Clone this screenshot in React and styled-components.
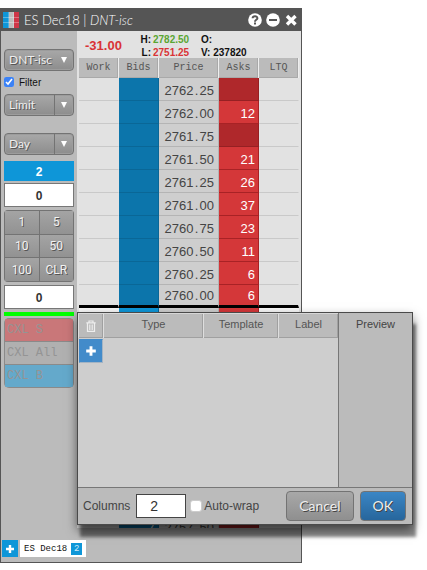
import React, { useState } from 'react';
import styled, { createGlobalStyle } from 'styled-components';

const Global = createGlobalStyle`
  *, *::before, *::after { box-sizing: border-box; }
  body { margin: 0; background: #fff; font-family: "Liberation Sans", Arial, sans-serif; color: #444; }
  button, input, select { font-family: inherit; margin: 0; padding: 0; border-radius: 0; }
`;

const Desktop = styled.main`
  position: relative;
  height: 100vh;
  min-height: 480px;
  padding: 8px 125px 7px 0;
  overflow: hidden;
`;

const TraderWindow = styled.section`
  display: flex;
  flex-direction: column;
  height: 100%;
  border: 1px solid #555;
  background: #bbb;
`;

const TitleBar = styled.header`
  display: flex;
  align-items: center;
  gap: 5px;
  height: 22px;
  flex: none;
  padding: 0 3px 0 2px;
  background: #555;
  color: #fff;
`;

const Title = styled.h1`
  flex: 1;
  margin: 0;
  font: 300 13px/20px Lato, "Open Sans", sans-serif;
  white-space: nowrap;
`;

const WindowActions = styled.div`
  display: flex;
  gap: 4px;
`;

const IconButton = styled.button`
  display: flex;
  border: 0;
  background: none;
  color: #fff;
`;

const Workspace = styled.div`
  display: flex;
  flex: 1;
  min-height: 0;
`;

const OrderPanel = styled.aside`
  display: flex;
  flex-direction: column;
  flex: none;
  width: 76px;
  padding: 18px 3px 0;
  background: #bbb;
`;

const SelectBox = styled.div`
  position: relative;
  height: 22px;
  margin-bottom: ${(p) => p.$after}px;
  border: 1px solid #737373;
  border-radius: 4px;
  background: linear-gradient(#a8a8a8, #8d8d8d);
  box-shadow: inset 0 0 0 1px #9c9c9c;
`;

const Select = styled.select`
  width: 100%;
  height: 20px;
  padding-left: 4px;
  appearance: none;
  border: 0;
  background: transparent;
  color: #eee;
  font: 400 12px/20px Lato, sans-serif;
  text-shadow: 1px 1px 0 #555;
`;

const Arrow = styled.span`
  position: absolute;
  top: 0;
  right: 0;
  bottom: 0;
  display: flex;
  align-items: center;
  justify-content: center;
  width: 19px;
  border-left: ${(p) => (p.$divided ? '1px solid #737373' : '0')};
  pointer-events: none;
`;

const FilterLabel = styled.label`
  display: flex;
  align-items: center;
  gap: 5px;
  height: 12px;
  margin-bottom: 6px;
  color: #111;
  font-size: 10px;
`;

const Check = styled.input`
  flex: none;
  width: ${(p) => p.$size}px;
  height: ${(p) => p.$size}px;
  accent-color: #3b82f6;
  ${(p) => p.$plain && 'appearance: none; border: 1px solid #ccc; border-radius: 3px; background: #fff;'}
`;

const TotalQty = styled.output`
  height: 20px;
  margin-bottom: 2px;
  background: #0e96d8;
  color: #fff;
  font: 700 12px/22px "Liberation Sans", sans-serif;
  text-align: center;
`;

const QtyInput = styled.input`
  width: 100%;
  height: 24px;
  padding-top: 2px;
  border: 1px solid #777;
  background: #fff;
  color: #333;
  font-size: 12px;
  font-weight: 700;
  text-align: center;
`;

const Keypad = styled.div`
  display: grid;
  grid-template-columns: 1fr 1fr;
  gap: 1px;
  height: 72px;
  margin: 3px 0;
  padding: 1px;
  border-radius: 4px;
  background: #737373;
  overflow: hidden;
`;

const Key = styled.button`
  border: 0;
  background: linear-gradient(#a4a4a4, #929292);
  color: #f2f2f2;
  font-size: 12px;
  font-family: Roboto, sans-serif;
  text-shadow: 1px 1px 0 #555;
`;

const StatusLine = styled.div`
  height: 4px;
  margin: 3px 0 2px;
  background: #0f0;
`;

const CancelStack = styled.div`
  display: grid;
  gap: 1px;
  height: 70px;
  padding: 1px;
  border-radius: 5px;
  background: #8a8a8a;
  overflow: hidden;
`;

const CancelOrders = styled.button`
  padding-left: 2px;
  border: 0;
  background: ${(p) => p.$tone};
  color: #949494;
  font: 12px/20px "Liberation Mono", monospace;
  text-align: left;
`;

const Ladder = styled.div`
  display: flex;
  flex-direction: column;
  flex: 1;
  min-width: 0;
  background: #bbb;
`;

const LadderClip = styled.div`
  flex: 1;
  min-height: 0;
  margin-bottom: 12px;
  padding: 0 2px;
  overflow: hidden;
  background: #e2e2e2;
`;

const Stats = styled.div`
  display: flex;
  align-items: center;
  height: 27px;
  padding: 2px 0 0 6px;
  color: #111;
  font-weight: 700;
`;

const NetChange = styled.strong`
  width: 54px;
  color: #d93336;
  font-size: 13px;
`;

const StatGrid = styled.dl`
  display: grid;
  grid-template-columns: 14px 48px auto;
  margin: 0;
  font-size: 10px;
  line-height: 13px;
  white-space: nowrap;
`;

const StatName = styled.dt`
  text-align: right;
  padding-right: 2px;
`;

const StatValue = styled.dd`
  margin: 0;
  color: ${(p) => p.$color || '#111'};
`;

const PriceTable = styled.table`
  width: 100%;
  table-layout: fixed;
  border-collapse: separate;
  border-spacing: 0;
`;

const HeadCell = styled.th`
  width: ${(p) => p.$width};
  height: 20px;
  padding: 0;
  border-right: 1px solid #eee;
  box-shadow: inset -1px -1px 0 #a9a9a9;
  background: #bbb;
  color: #555;
  font: 400 10px/20px "Liberation Mono", monospace;
`;

const cellTone = {
  idle: ['#e2e2e2', '#c9c9c9'],
  fresh: ['#f8f8f8', '#c9c9c9'],
  price: ['#cecece', '#b4b4b4'],
  bid: ['#0c75ab', '#0a6797'],
  liveBid: ['#0e96d8', '#0a6797'],
  ask: ['#d43739', '#a82225'],
  emptyAsk: ['#af282b', '#962023'],
};

const Cell = styled.td`
  height: 23px;
  padding: ${(p) => (p.$marker ? '1px' : '2px')} ${(p) => (p.$tone === 'price' ? '4px' : '3px')} 0 0;
  border-right: 1px solid ${(p) => (p.$tone === 'idle' || p.$tone === 'fresh' ? 'transparent' : cellTone[p.$tone][1])};
  border-bottom: ${(p) => (p.$marker ? '3px solid #000' : `1px solid ${cellTone[p.$tone][1]}`)};
  background: ${(p) => cellTone[p.$tone][0]};
  color: ${(p) => (p.$tone === 'price' ? '#444' : '#fff')};
  font-size: 13px;
  line-height: 19px;
  text-align: right;
  white-space: nowrap;
`;

const Point = styled.span`
  display: inline-block;
  width: 6px;
  text-align: center;
`;

const TabBar = styled.footer`
  display: flex;
  align-items: flex-start;
  gap: 2px;
  flex: none;
  height: 22px;
  padding-left: 1px;
`;

const AddTab = styled.button`
  display: flex;
  align-items: center;
  justify-content: center;
  width: 16px;
  height: 17px;
  border: 0;
  background: #0e96d8;
  color: #fff;
`;

const Tab = styled.button`
  display: flex;
  align-items: center;
  gap: 4px;
  height: 17px;
  padding: 0 4px;
  border: 0;
  background: #fff;
  color: #111;
  font-size: 9px;
  font-family: "Liberation Mono", monospace;
`;

const TabCount = styled.span`
  width: 11px;
  height: 12px;
  background: #0e96d8;
  color: #cdeafa;
  font-size: 9px;
  line-height: 12px;
`;

const Dialog = styled.section`
  position: absolute;
  top: 312px;
  right: 14px;
  bottom: 45px;
  left: 77px;
  display: flex;
  flex-direction: column;
  border: 1px solid #4a4a4a;
  background: #bbb;
  box-shadow: 0 5px 10px rgba(0, 0, 0, 0.55), 3px 12px 3px 0 rgba(0, 0, 0, 0.45);
`;

const DialogBody = styled.div`
  display: flex;
  flex: 1;
  min-height: 0;
  border-bottom: 1px solid #777;
`;

const Buttons = styled.div`
  flex: 1;
  min-width: 0;
  background: #cecece;
`;

const ButtonTable = styled.table`
  width: 100%;
  table-layout: fixed;
  border-collapse: separate;
  border-spacing: 0;
`;

const ButtonHead = styled.th`
  width: ${(p) => p.$width};
  height: 25px;
  padding: 0;
  border-top: 1px solid #d6d6d6;
  border-left: 1px solid #dedede;
  box-shadow: inset -1px -1px 0 #a0a0a0;
  background: #bbb;
  color: #555;
  font-size: 11px;
  font-weight: 400;
  line-height: 20px;
  vertical-align: top;
`;

const HeadIcon = styled.span`
  display: flex;
  align-items: center;
  justify-content: center;
  height: 24px;
`;

const AddCell = styled.td`
  padding: 1px 0 0 1px;
`;

const AddButton = styled.button`
  display: flex;
  align-items: center;
  justify-content: center;
  width: 24px;
  height: 24px;
  border: 1px solid #a4b4c4;
  border-top-color: #428bca;
  border-left-color: #428bca;
  background: #428bca;
  color: #fff;
`;

const Preview = styled.div`
  flex: none;
  width: 74px;
  border-left: 1px solid #777;
  color: #444;
  font-size: 11px;
  line-height: 22px;
  text-align: center;
`;

const DialogFooter = styled.footer`
  display: flex;
  align-items: center;
  flex: none;
  height: 36px;
  padding: 0 6px 0 5px;
  font-size: 12px;
`;

const ColumnsLabel = styled.label`
  display: flex;
  align-items: center;
  gap: 6px;
  margin-right: 4px;
`;

const ColumnsInput = styled.input`
  width: 50px;
  height: 24px;
  padding-left: 13px;
  border: 1px solid #444;
  background: #fff;
  color: #333;
  font-size: 14px;
`;

const WrapLabel = styled.label`
  display: flex;
  flex: 1;
  align-items: center;
  gap: 2px;
  white-space: nowrap;
`;

const ActionButton = styled.button`
  height: 30px;
  padding: 0 12px;
  margin-left: 6px;
  border: 1px solid #737373;
  border-radius: 4px;
  background: ${(p) => (p.$primary ? 'linear-gradient(#3b86c5, #27669c)' : 'linear-gradient(#a8a8a8, #8f8f8f)')};
  color: #eee;
  font: 400 14px/26px Lato, sans-serif;
  text-shadow: 1px 1px 0 #444;
`;

const Plus = ({ size = 10 }) => (
  <svg width={size} height={size} viewBox="0 0 10 10" aria-hidden="true">
    <path d="M5 1v8M1 5h8" stroke="currentColor" strokeWidth="2.4" />
  </svg>
);

const Triangle = () => (
  <svg width="8" height="8" viewBox="0 0 8 8" aria-hidden="true">
    <path d="M1 1h6L4 7z" fill="#fff" />
  </svg>
);

const LadderLogo = () => (
  <svg width="16" height="16" viewBox="0 0 16 16" aria-hidden="true">
    <path d="M0 0h6v16H0z" fill="#0e96d8" />
    <path d="M6 0h5v16H6z" fill="#bdbdbd" />
    <path d="M11 0h5v16h-5z" fill="#cf3648" />
    <path d="M0 5.5h16M0 10.5h16" stroke="#fff" strokeOpacity=".3" />
    <path d="M5.500 0v16M10.500 0v16" stroke="#fff" strokeOpacity=".25" />
  </svg>
);

const HelpIcon = () => (
  <svg width="14" height="14" viewBox="0 0 14 14" aria-hidden="true">
    <circle cx="7" cy="7" r="6.8" fill="#fff" />
    <path d="M4.600 5.300C4.700 2.500 9.400 2.500 9.400 5.200 9.400 6.800 7 6.800 7 8.700" fill="none" stroke="#555" strokeWidth="2" />
    <path d="M6 9.600h2v1.900H6z" fill="#555" />
  </svg>
);

const MinusIcon = () => (
  <svg width="14" height="14" viewBox="0 0 14 14" aria-hidden="true">
    <circle cx="7" cy="7" r="6.8" fill="#fff" />
    <path d="M3 7h8" stroke="#555" strokeWidth="2" />
  </svg>
);

const CloseIcon = () => (
  <svg width="14" height="14" viewBox="0 0 14 14" aria-hidden="true">
    <path d="M3 3l8.500 8.500M11.500 3L3 11.500" stroke="#fff" strokeWidth="3.4" />
  </svg>
);

const TrashIcon = () => (
  <svg width="10" height="12" viewBox="0 0 10 12" fill="none" stroke="#eee" aria-hidden="true">
    <path d="M.3 2.8h9.4M3 2.5V1h4v1.500M1.500 3v8.400h7V3" strokeWidth="1.2" />
    <path d="M3.500 4.500v5.500M5 4.500v5.500M6.500 4.500v5.500" strokeWidth=".8" />
  </svg>
);

const ladderRows = [
  ['2762.25', ''], ['2762.00', '12'], ['2761.75', ''], ['2761.50', '21'], ['2761.25', '26'],
  ['2761.00', '37'], ['2760.75', '23'], ['2760.50', '11'], ['2760.25', '6'], ['2760.00', '6'],
  ['2759.75', ''], ['2759.50', ''], ['2759.25', ''], ['2759.00', ''], ['2758.75', ''],
  ['2758.50', ''], ['2758.25', ''], ['2758.00', ''], ['2757.75', ''], ['2757.50', ''],
];
const MARKET_ROW = 9;

function LadderRow({ price, ask, index }) {
  const [whole, cents] = price.split('.');
  const marker = index === MARKET_ROW;
  const market = index === MARKET_ROW + 1;
  const last = index === ladderRows.length - 1;
  return (
    <tr>
      <Cell $tone={market ? 'fresh' : 'idle'} $marker={marker} />
      <Cell $tone={market ? 'liveBid' : 'bid'} $marker={marker}>{last ? '7' : ''}</Cell>
      <Cell $tone="price" $marker={marker}>{whole}<Point>.</Point>{cents}</Cell>
      <Cell $tone={ask || market ? 'ask' : 'emptyAsk'} $marker={marker}>{ask}</Cell>
      <Cell $tone={market ? 'fresh' : 'idle'} $marker={marker} />
    </tr>
  );
}

function Dropdown({ label, value, divided, after }) {
  return (
    <SelectBox $after={after}>
      <Select aria-label={label} defaultValue={value}>
        <option>{value}</option>
      </Select>
      <Arrow $divided={divided}><Triangle /></Arrow>
    </SelectBox>
  );
}

export default function App() {
  const [columns, setColumns] = useState('2');
  return (
    <Desktop>
      <Global />
      <TraderWindow>
        <TitleBar>
          <LadderLogo />
          <Title>ES Dec18 | <em>DNT-isc</em></Title>
          <WindowActions>
            <IconButton aria-label="Help"><HelpIcon /></IconButton>
            <IconButton aria-label="Minimize"><MinusIcon /></IconButton>
            <IconButton aria-label="Close"><CloseIcon /></IconButton>
          </WindowActions>
        </TitleBar>
        <Workspace>
          <OrderPanel>
            <Dropdown label="Account" value="DNT-isc" after={5} />
            <FilterLabel><Check $size={10} type="checkbox" defaultChecked />Filter</FilterLabel>
            <Dropdown label="Order type" value="Limit" divided after={17} />
            <Dropdown label="Time in force" value="Day" divided after={6} />
            <TotalQty>2</TotalQty>
            <QtyInput aria-label="Order quantity" defaultValue="0" />
            <Keypad>
              {['1', '5', '10', '50', '100', 'CLR'].map((k) => <Key key={k}>{k}</Key>)}
            </Keypad>
            <QtyInput aria-label="Position" defaultValue="0" />
            <StatusLine />
            <CancelStack>
              <CancelOrders disabled $tone="#c97779">CXL S</CancelOrders>
              <CancelOrders disabled $tone="#b0b0b0">CXL All</CancelOrders>
              <CancelOrders disabled $tone="#64a9cb">CXL B</CancelOrders>
            </CancelStack>
          </OrderPanel>
          <Ladder>
            <LadderClip>
              <Stats>
                <NetChange>-31.00</NetChange>
                <StatGrid>
                  <StatName>H:</StatName><StatValue $color="#5aa632">2782.50</StatValue><StatValue>O:</StatValue>
                  <StatName>L:</StatName><StatValue $color="#d93336">2751.25</StatValue><StatValue>V: 237820</StatValue>
                </StatGrid>
              </Stats>
              <PriceTable>
                <thead>
                  <tr>
                    <HeadCell $width="40px">Work</HeadCell>
                    <HeadCell $width="40px">Bids</HeadCell>
                    <HeadCell>Price</HeadCell>
                    <HeadCell $width="40px">Asks</HeadCell>
                    <HeadCell $width="40px">LTQ</HeadCell>
                  </tr>
                </thead>
                <tbody>
                  {ladderRows.map(([price, ask], i) => <LadderRow key={price} price={price} ask={ask} index={i} />)}
                </tbody>
              </PriceTable>
            </LadderClip>
          </Ladder>
        </Workspace>
        <TabBar>
          <AddTab aria-label="Add tab"><Plus /></AddTab>
          <Tab>ES Dec18<TabCount>2</TabCount></Tab>
        </TabBar>
      </TraderWindow>

      <Dialog role="dialog" aria-label="Button settings">
        <DialogBody>
          <Buttons>
            <ButtonTable>
              <thead>
                <tr>
                  <ButtonHead $width="25px" aria-label="Delete"><HeadIcon><TrashIcon /></HeadIcon></ButtonHead>
                  <ButtonHead>Type</ButtonHead>
                  <ButtonHead $width="75px">Template</ButtonHead>
                  <ButtonHead $width="60px">Label</ButtonHead>
                </tr>
              </thead>
              <tbody>
                <tr><AddCell><AddButton aria-label="Add button"><Plus size={12} /></AddButton></AddCell></tr>
              </tbody>
            </ButtonTable>
          </Buttons>
          <Preview>Preview</Preview>
        </DialogBody>
        <DialogFooter>
          <ColumnsLabel>
            Columns
            <ColumnsInput value={columns} onChange={(e) => setColumns(e.target.value)} />
          </ColumnsLabel>
          <WrapLabel><Check $size={12} $plain type="checkbox" />Auto-wrap</WrapLabel>
          <ActionButton>Cancel</ActionButton>
          <ActionButton $primary>OK</ActionButton>
        </DialogFooter>
      </Dialog>
    </Desktop>
  );
}
